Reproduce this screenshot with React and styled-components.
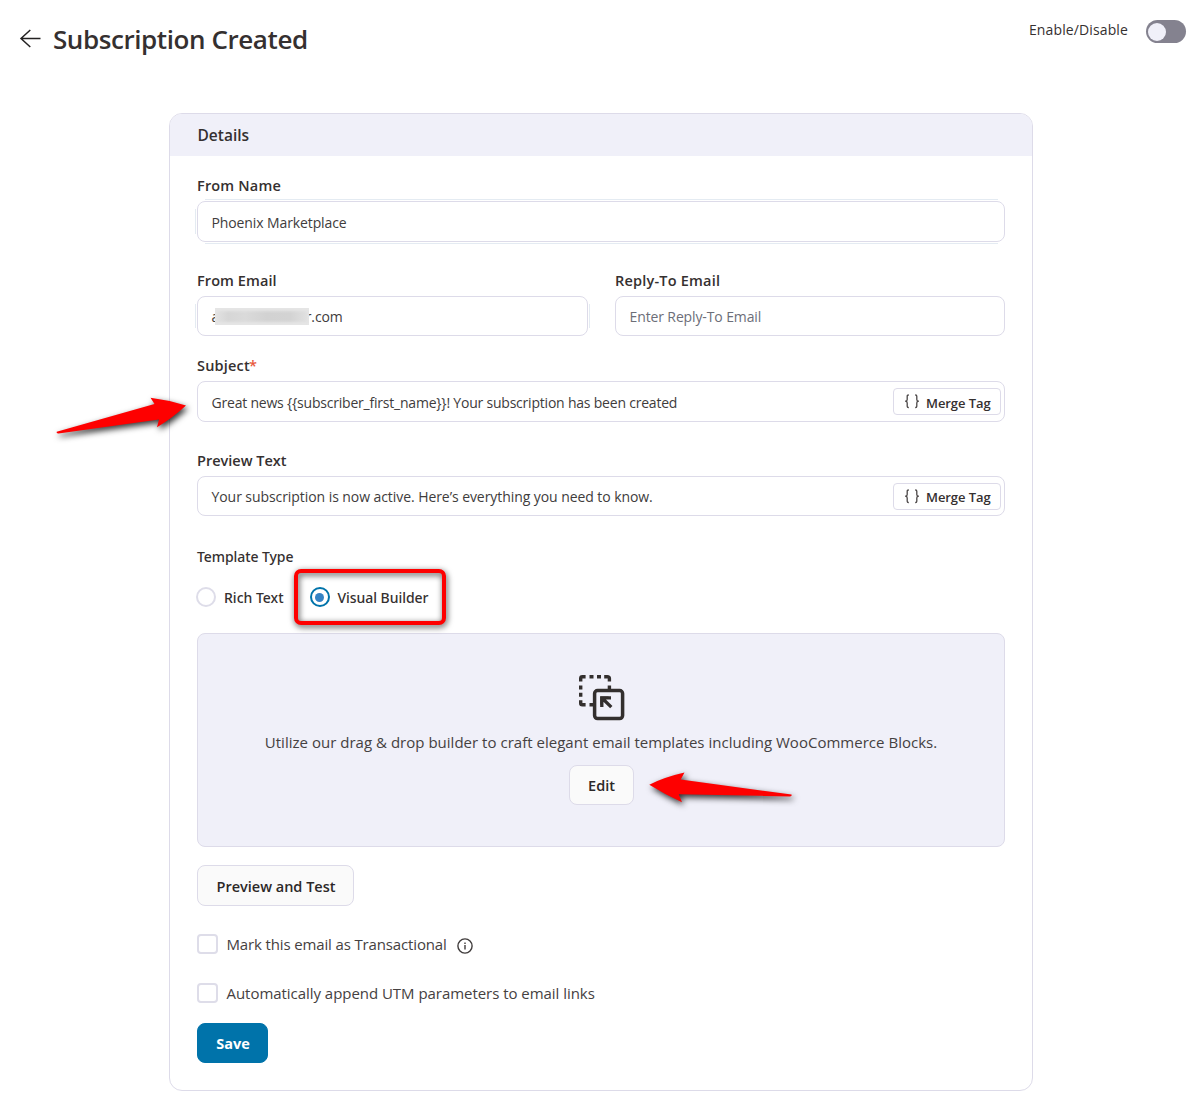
import styled, { createGlobalStyle, css } from "styled-components";

const GlobalStyle = createGlobalStyle`
  *, *::before, *::after { box-sizing: border-box; }
  body {
    margin: 0;
    background: #ffffff;
    color: #353030;
    font-family: "Open Sans", "Noto Sans", sans-serif;
  }
  button { font-family: inherit; color: inherit; }
`;

const Page = styled.div`
  position: relative;
  width: 1200px;
  height: 1119px;
  overflow: hidden;
`;

const TopBar = styled.header`
  display: flex;
  align-items: flex-start;
  justify-content: space-between;
  height: 113px;
  padding: 20px 14px 0 19px;
`;

const TitleGroup = styled.div`
  display: flex;
  align-items: center;
  gap: 11px;
  height: 38px;
`;

const Title = styled.h1`
  margin: 0;
  font-size: 26px;
  font-weight: 600;
  line-height: 38px;
  letter-spacing: -0.42px;
`;

const ToggleGroup = styled.div`
  display: flex;
  align-items: center;
  gap: 18px;
  font-size: 14px;
  letter-spacing: 0.12px;
`;

const ToggleLabel = styled.span`
  line-height: 20px;
  margin-top: -3px;
`;

const Toggle = styled.button`
  display: flex;
  align-items: center;
  width: 40px;
  height: 23px;
  padding: 0 2px;
  border: none;
  border-radius: 12px;
  background: #84828f;
`;

const Knob = styled.span`
  width: 18px;
  height: 18px;
  border-radius: 50%;
  background: #f0f0f9;
`;

const Card = styled.section`
  width: 864px;
  height: 978px;
  margin-left: 169px;
  border: 1px solid #dddbe9;
  border-radius: 13px;
  overflow: hidden;
`;

const CardHeader = styled.h2`
  height: 42px;
  margin: 0;
  padding-left: 27.5px;
  background: #f0f0f9;
  font-size: 15.5px;
  font-weight: 600;
  line-height: 42px;
`;

const CardBody = styled.div`
  display: flex;
  flex-direction: column;
  align-items: flex-start;
  padding: 20px 27px 0;
`;

const FieldRow = styled.div`
  display: flex;
  gap: 27px;
  width: 100%;
  margin-bottom: ${(p) => p.$gap}px;
`;

const Field = styled.div`
  flex: ${(p) => (p.$width ? `0 0 ${p.$width}px` : "1")};
`;

const Label = styled.div`
  height: 20px;
  margin-bottom: 5px;
  font-size: 14.5px;
  font-weight: 600;
  line-height: 20px;
  letter-spacing: ${(p) => p.$track || 0}px;
`;

const Required = styled.span`
  color: #e8583a;
  margin-left: -1px;
`;

const sideShade = css`
  &::before {
    content: "";
    position: absolute;
    top: 7px;
    bottom: 7px;
    left: -3px;
    right: ${(p) => (p.$shade === "sides" ? "-3px" : "0")};
    border: 0 solid #e4ebf2;
    border-left-width: 1px;
    border-right-width: ${(p) => (p.$shade === "sides" ? "1px" : "0")};
  }
`;

const frameShade = css`
  &::after {
    content: "";
    position: absolute;
    top: -3px;
    bottom: -3px;
    left: 7px;
    right: 6px;
    border: 0 solid #e4ebf2;
    border-top-width: 1px;
    border-bottom-width: 1px;
  }
`;

const Input = styled.div`
  position: relative;
  display: flex;
  align-items: center;
  height: ${(p) => p.$height || 40}px;
  padding: 1px 3px 0 13.5px;
  border: 1px solid #dddbe9;
  border-radius: 8px;
  background: #fff;
  color: ${(p) => (p.$placeholder ? "#6c6e78" : "#403c3c")};
  font-size: 14px;
  letter-spacing: ${(p) => p.$track || 0}px;
  white-space: nowrap;
  ${(p) => p.$shade && sideShade}
  ${(p) => p.$shade === "frame" && frameShade}
`;

const Redacted = styled.span`
  width: 94px;
  height: 17px;
  margin-left: -4px;
  background: linear-gradient(90deg, #e3e3e3, #d6d6d6 14%, #dadada 32%, #d2d2d2 55%, #d3d3d3 80%, #e2e2e2);
  box-shadow: inset 0 3px 3px #e6e6e6, inset 0 -3px 3px #e6e6e6;
  z-index: 1;
`;

const Masked = styled.span`
  margin-left: ${(p) => p.$shift || 0}px;
`;

const MergeButton = styled.button`
  display: flex;
  align-items: center;
  width: 108px;
  height: 27px;
  margin: -1px 0 0 auto;
  padding: 0 0 0 11px;
  border: 1px solid #dddbe9;
  border-radius: 4px;
  background: #fff;
  color: #353030;
  font-size: 13px;
  font-weight: 600;
  line-height: 18px;
  letter-spacing: -0.08px;
`;

const MergeText = styled.span`
  margin: ${(p) => p.$top}px 0 0 7px;
`;

const TemplateLabel = styled.div`
  height: 20px;
  margin-bottom: 20px;
  font-family: "Noto Sans", sans-serif;
  font-size: 14px;
  font-weight: 500;
  line-height: 20px;
  letter-spacing: -0.08px;
`;

const RadioRow = styled.div`
  display: flex;
  align-items: center;
  height: 20px;
  margin: 0 0 26px -1px;
  font-family: "Noto Sans", sans-serif;
  font-size: 14px;
  font-weight: 500;
`;

const RadioOption = styled.div`
  position: relative;
  display: flex;
  align-items: center;
  gap: 8px;
  margin-right: 26px;
  letter-spacing: ${(p) => p.$track}px;
  white-space: nowrap;
`;

const RadioMark = styled.span`
  display: grid;
  place-items: center;
  width: 20px;
  height: 20px;
  border: 2px solid ${(p) => (p.$checked ? "#0073aa" : "#dedde9")};
  border-radius: 50%;

  &::after {
    content: "";
    width: 9px;
    height: 9px;
    border-radius: 50%;
    background: ${(p) => (p.$checked ? "#3582c4" : "transparent")};
  }
`;

const Highlight = styled.span`
  position: absolute;
  top: -18px;
  left: -16px;
  width: 152px;
  height: 56px;
  border: 4px solid #fe0000;
  border-radius: 7px;
  filter: drop-shadow(1px 2px 3px rgba(0, 0, 0, 0.75));
`;

const BuilderPanel = styled.div`
  display: flex;
  flex-direction: column;
  align-items: center;
  width: 100%;
  height: 214px;
  margin-bottom: 18px;
  padding-top: 41px;
  border: 1px solid #dddbe9;
  border-radius: 8px;
  background: #f0f0f9;
`;

const BuilderIcon = styled.svg`
  margin-left: 2px;
`;

const BuilderText = styled.p`
  margin: 11px 0 13px;
  color: #454141;
  font-size: 15px;
  line-height: 20px;
  letter-spacing: 0.02px;
`;

const Button = styled.button`
  width: ${(p) => p.$width}px;
  height: ${(p) => p.$height || 40}px;
  padding: 1px 0 0 1px;
  border: 1px solid ${(p) => (p.$primary ? "#0073aa" : "#dddbe9")};
  border-radius: 8px;
  background: ${(p) => (p.$primary ? "#0073aa" : "#fafafa")};
  color: ${(p) => (p.$primary ? "#fff" : "#2c2828")};
  font-size: 14.5px;
  font-weight: ${(p) => (p.$primary ? 700 : 600)};
`;

const CheckRow = styled.div`
  display: flex;
  align-items: center;
  height: 20px;
  margin-top: ${(p) => p.$top}px;
  color: #454141;
  font-size: 15px;
  letter-spacing: ${(p) => p.$track}px;
`;

const CheckBox = styled.span`
  width: 21px;
  height: 20px;
  margin-right: 8.5px;
  border: 2px solid #dedde9;
  border-radius: 4px;
  background: #fff;
`;

const InfoIcon = styled.svg`
  margin: 3px 0 0 10px;
`;

const SaveSlot = styled.div`
  margin-top: 20px;
`;

const Pointer = styled.svg`
  position: absolute;
  top: ${(p) => p.$top}px;
  left: ${(p) => p.$left}px;
  overflow: visible;
  filter: drop-shadow(2px 3px 3px rgba(0, 0, 0, 0.8));
`;

const BackArrow = () => (
  <svg width="23" height="20" viewBox="0 0 23 20" fill="none" stroke="#242222" strokeWidth="1.5">
    <path d="M11.3 1 2 9.5 11.3 18M2 9.5h19.5" />
  </svg>
);

const DragIcon = () => (
  <BuilderIcon width="46" height="46" viewBox="0 0 46 46" fill="none" stroke="#332f2e">
    <path
      strokeWidth="3.4"
      d="M1.7 6.6V3.4Q1.7 1.7 3.4 1.7H6.6M10.5 1.7h4M18 1.7h4M25.2 1.7h3Q30.4 1.7 30.4 3.6V6.6M30.4 10.6v4M1.7 10.4v4M1.7 17.8v4M1.7 25.2v3Q1.7 29.8 3.4 29.8H6.6M10.5 29.8h4"
    />
    <rect x="15.6" y="15.6" width="28" height="28" rx="3" strokeWidth="3.5" />
    <path d="M22.8 32V22.9h9.2M23.5 23.5l8.8 8.6" strokeWidth="3.3" />
    <path d="M21.3 21.4h8.5l-8.5 8.5z" fill="#332f2e" stroke="none" />
  </BuilderIcon>
);

const Braces = () => (
  <svg width="14" height="15" viewBox="0 0 14 15" fill="none" stroke="#4b4747" strokeWidth="1.3">
    <path d="M3.8 1H3.5Q2.2 1 2.2 2.3V5.4Q2.2 6.8.8 7.2Q2.2 7.6 2.2 9V12.2Q2.2 13.5 3.5 13.5h.3" />
    <path d="M10.2 1h.3Q11.8 1 11.8 2.3V5.4Q11.8 6.8 13.2 7.2Q11.8 7.6 11.8 9V12.2Q11.8 13.5 10.5 13.5H10.2" />
  </svg>
);

const MergeTag = ({ textTop }) => (
  <MergeButton>
    <Braces />
    <MergeText $top={textTop}>Merge Tag</MergeText>
  </MergeButton>
);

export default function App() {
  return (
    <Page>
      <GlobalStyle />
      <TopBar>
        <TitleGroup>
          <BackArrow />
          <Title>Subscription Created</Title>
        </TitleGroup>
        <ToggleGroup>
          <ToggleLabel>Enable/Disable</ToggleLabel>
          <Toggle aria-label="Enable/Disable">
            <Knob />
          </Toggle>
        </ToggleGroup>
      </TopBar>

      <Card>
        <CardHeader>Details</CardHeader>
        <CardBody>
          <FieldRow $gap={29}>
            <Field>
              <Label $track={0.18}>From Name</Label>
              <Input $height={41} $shade="frame" $track={-0.11}>Phoenix Marketplace</Input>
            </Field>
          </FieldRow>

          <FieldRow $gap={20}>
            <Field $width={391}>
              <Label $track={0.08}>From Email</Label>
              <Input $shade="sides" $track={-0.1}>
                <Masked>a</Masked>
                <Redacted />
                <Masked $shift={-3.5}>r.com</Masked>
              </Input>
            </Field>
            <Field>
              <Label $track={0.2}>Reply-To Email</Label>
              <Input $placeholder $track={-0.12}>Enter Reply-To Email</Input>
            </Field>
          </FieldRow>

          <FieldRow $gap={29}>
            <Field>
              <Label $track={0.2}>
                Subject<Required>*</Required>
              </Label>
              <Input $height={41} $track={-0.21}>
                {"Great news {{subscriber_first_name}}! Your subscription has been created"}
                <MergeTag textTop={3} />
              </Input>
            </Field>
          </FieldRow>

          <FieldRow $gap={31}>
            <Field>
              <Label>Preview Text</Label>
              <Input $track={-0.068}>
                Your subscription is now active. Here’s everything you need to know.
                <MergeTag textTop={1} />
              </Input>
            </Field>
          </FieldRow>

          <TemplateLabel>Template Type</TemplateLabel>
          <RadioRow>
            <RadioOption $track={0}>
              <RadioMark />
              Rich Text
            </RadioOption>
            <RadioOption $track={-0.05}>
              <RadioMark $checked />
              Visual Builder
              <Highlight />
            </RadioOption>
          </RadioRow>

          <BuilderPanel>
            <DragIcon />
            <BuilderText>
              Utilize our drag &amp; drop builder to craft elegant email templates including WooCommerce Blocks.
            </BuilderText>
            <Button $width={65}>Edit</Button>
          </BuilderPanel>

          <Button $width={157} $height={41}>Preview and Test</Button>

          <CheckRow $top={28} $track={-0.14}>
            <CheckBox />
            Mark this email as Transactional
            <InfoIcon width="16" height="16" viewBox="0 0 16 16" fill="none" stroke="#403c3c">
              <circle cx="8" cy="8" r="7.1" strokeWidth="1.4" />
              <path d="M8 7v4.6M8 4.4v1.5" strokeWidth="1.4" />
            </InfoIcon>
          </CheckRow>
          <CheckRow $top={29} $track={-0.04}>
            <CheckBox />
            Automatically append UTM parameters to email links
          </CheckRow>

          <SaveSlot>
            <Button $primary $width={71}>Save</Button>
          </SaveSlot>
        </CardBody>
      </Card>

      <Pointer $left={56} $top={397} width="131" height="38" viewBox="0 0 131 38">
        <path fill="#fe0000" d="M130 8.4 Q112 3 94.5 .8 L98.5 7 L.7 34.7 Q0 36.5 2.5 36.4 L103 22.4 L101 30.2 Q117 20.5 130 8.4Z" />
      </Pointer>
      <Pointer $left={649} $top={772} width="143" height="31" viewBox="0 0 143 31">
        <path fill="#fe0000" d="M.3 12.7 Q16 5 35.5 .6 L31.7 7.6 L142.5 22.5 Q143.2 24.3 141 24.4 L29.7 22.3 L33 30.2 Q16 22.5 .3 12.7Z" />
      </Pointer>
    </Page>
  );
}
